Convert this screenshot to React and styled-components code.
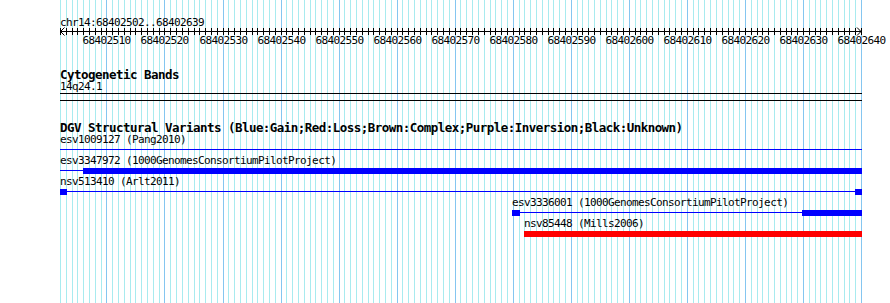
import React from 'react';
import styled, { createGlobalStyle } from 'styled-components';

const VIEW_START = 68402502;
const VIEW_END = 68402640;
const TRACK_WIDTH = 802;
const BP_PX = (TRACK_WIDTH - 1) / (VIEW_END - VIEW_START);

const MONO = '"DejaVu Sans Mono", "Liberation Mono", monospace';

const toX = (bp) => (bp - VIEW_START) * BP_PX;

const features = [
  { name: 'esv1009127', source: 'Pang2010', start: 68402400, end: 68402800, color: '#0000ff', connector: true, blocks: [] },
  { name: 'esv3347972', source: '1000GenomesConsortiumPilotProject', start: 68402400, end: 68402800, color: '#0000ff', connector: true, blocks: [[68402506, 68402800]] },
  { name: 'nsv513410', source: 'Arlt2011', start: 68402400, end: 68402800, color: '#0000ff', connector: true, blocks: [[68402400, 68402503.1], [68402638.9, 68402800]] },
  { name: 'esv3336001', source: '1000GenomesConsortiumPilotProject', start: 68402579.9, end: 68402800, color: '#0000ff', connector: true, blocks: [[68402579.9, 68402581.1], [68402629.8, 68402800]] },
  { name: 'nsv85448', source: 'Mills2006', start: 68402582, end: 68402800, color: '#ff0000', connector: false, blocks: [[68402582, 68402800]] },
];

const GlobalStyle = createGlobalStyle`
  html, body {
    margin: 0;
    padding: 0;
    background: #ffffff;
  }
  body {
    font-family: ${MONO};
    color: #000000;
  }
`;

const Page = styled.div`
  position: relative;
  width: 890px;
  height: 303px;
  overflow: hidden;
  background: #ffffff;
`;

const GridLayer = styled.svg`
  position: absolute;
  left: 0;
  top: 0;
  z-index: 0;
`;

const Tracks = styled.div`
  position: relative;
  z-index: 1;
  padding-left: 60px;
  width: ${TRACK_WIDTH}px;
`;

const SmallText = styled.div`
  font-size: 11px;
  letter-spacing: -0.62px;
  white-space: nowrap;
`;

const RegionLabel = styled(SmallText)`
  margin-top: 16px;
  line-height: 13px;
`;

const RulerSvg = styled.svg`
  display: block;
  margin-top: -2px;
  overflow: visible;
`;

const TrackTitle = styled.div`
  margin-top: 20px;
  font-weight: bold;
  font-size: 12.5px;
  line-height: 13px;
  letter-spacing: -0.53px;
  white-space: nowrap;
`;

const SubLabel = styled(SmallText)`
  line-height: 11px;
`;

const Band = styled.div`
  margin-top: 1px;
  height: 6px;
  border-top: 1px solid #000000;
  border-bottom: 1px solid #000000;
`;

const Row = styled.div`
  height: 21px;
`;

const FeatureLabel = styled(SmallText)`
  line-height: 11px;
`;

const Glyph = styled.div`
  position: relative;
  margin-top: 2px;
  height: 6px;
`;

const Connector = styled.div`
  position: absolute;
  left: 0;
  right: 0;
  top: 2px;
  height: 1px;
  background: ${(p) => p.$color};
`;

const Block = styled.div`
  position: absolute;
  top: 0;
  bottom: 0;
  background: ${(p) => p.$color};
`;

const ticks = Array.from({ length: VIEW_END - VIEW_START + 1 }, (_, k) => ({
  bp: VIEW_START + k,
  x: Math.round(toX(VIEW_START + k)),
}));

const Grid = () => (
  <GridLayer width="890" height="303" shapeRendering="crispEdges">
    {ticks.map((t) => (
      <rect
        key={t.bp}
        x={60 + t.x}
        y="0"
        width="1"
        height="303"
        fill={t.bp % 10 === 0 ? '#85c6f0' : '#a8ebef'}
      />
    ))}
  </GridLayer>
);

const Ruler = () => (
  <RulerSvg width={TRACK_WIDTH} height="21">
    <g stroke="#000000" strokeWidth="1" shapeRendering="crispEdges">
      <line x1="0" y1="4.5" x2={TRACK_WIDTH} y2="4.5" />
      {ticks.map((t) => (
        <line key={t.bp} x1={t.x + 0.5} y1="1" x2={t.x + 0.5} y2="8" />
      ))}
    </g>
    <g stroke="#000000" strokeWidth="1" fill="none">
      <polyline points="4.5,0.5 0.5,4.5 4.5,8.5" />
      <polyline points={`${TRACK_WIDTH - 5},0.5 ${TRACK_WIDTH - 1},4.5 ${TRACK_WIDTH - 5},8.5`} />
    </g>
    <g fontFamily={MONO} fontSize="11" letterSpacing="-0.62" textAnchor="middle" fill="#000000">
      {ticks
        .filter((t) => t.bp % 10 === 0)
        .map((t) => (
          <text key={t.bp} x={t.x + 0.5} y="16.5">
            {t.bp}
          </text>
        ))}
    </g>
  </RulerSvg>
);

const Feature = ({ f }) => {
  const left = Math.round(toX(Math.max(f.start, VIEW_START)));
  const right = Math.round(toX(Math.min(f.end, VIEW_END)));
  return (
    <Row>
      <FeatureLabel style={{ marginLeft: left }}>
        {f.name} ({f.source})
      </FeatureLabel>
      <Glyph style={{ marginLeft: left, width: right - left + 1 }}>
        {f.connector && <Connector $color={f.color} />}
        {f.blocks.map(([s, e]) => {
          const bl = Math.round(toX(Math.max(s, VIEW_START))) - left;
          const br = Math.round(toX(Math.min(e, VIEW_END))) - left;
          return <Block key={s} $color={f.color} style={{ left: bl, width: br - bl + 1 }} />;
        })}
      </Glyph>
    </Row>
  );
};

export default function App() {
  return (
    <>
      <GlobalStyle />
      <Page>
        <Grid />
        <Tracks>
          <RegionLabel>chr14:{VIEW_START}..{VIEW_END - 1}</RegionLabel>
          <Ruler />
          <TrackTitle>Cytogenetic Bands</TrackTitle>
          <SubLabel>14q24.1</SubLabel>
          <Band />
          <TrackTitle>
            DGV Structural Variants (Blue:Gain;Red:Loss;Brown:Complex;Purple:Inversion;Black:Unknown)
          </TrackTitle>
          {features.map((f) => (
            <Feature key={f.name} f={f} />
          ))}
        </Tracks>
      </Page>
    </>
  );
}
